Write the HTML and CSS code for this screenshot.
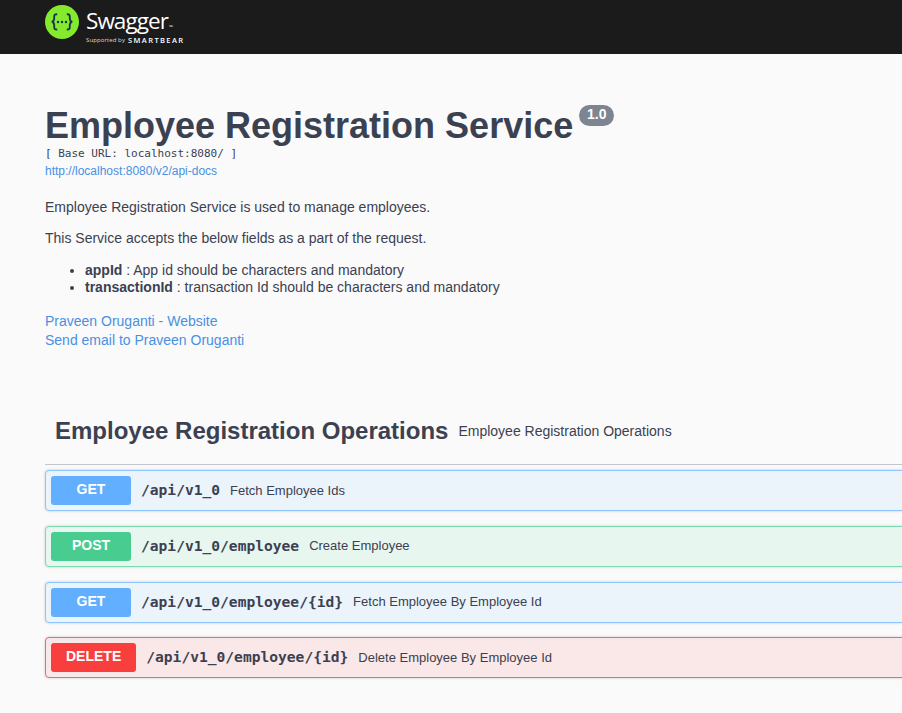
FILE: index.html
```html
<!DOCTYPE html>
<html lang="en">
<head>
<meta charset="utf-8">
<title>Swagger UI</title>
<link rel="stylesheet" href="styles.css">
</head>
<body>
<header class="topbar">
  <svg class="mark" viewBox="0 0 34 34" fill="none">
    <circle cx="17" cy="17" r="17" fill="#85ea2d"/>
    <path d="M12.2 9.3C9.5 9.1 9.1 10.2 9.2 12.2C9.4 15 9.1 16.3 6.8 16.8C9.1 17.3 9.4 18.7 9.2 21.4C9.1 23.8 9.7 24.7 12.2 24.5M21.8 9.3C24.5 9.1 24.9 10.2 24.8 12.2C24.6 15 24.9 16.3 27.2 16.8C24.9 17.3 24.6 18.7 24.8 21.4C24.9 23.8 24.3 24.7 21.8 24.5" stroke="#173647" stroke-width="1.9"/>
    <g fill="#173647"><circle cx="13" cy="17" r="1.2"/><circle cx="17" cy="17" r="1.2"/><circle cx="21" cy="17" r="1.2"/></g>
  </svg>
  <div class="brand">
    <div class="name">Swagger<span class="tm">™</span></div>
    <div class="support"><span class="by">Supported by</span><span class="smart">SMARTBEAR</span></div>
  </div>
</header>
<main>
  <section class="info">
    <div class="heading"><h1>Employee Registration Service</h1><span class="version">1.0</span></div>
    <div class="base">[ Base URL: localhost:8080/ ]</div>
    <a class="docs">http://localhost:8080/v2/api-docs</a>
    <p>Employee Registration Service is used to manage employees.</p>
    <p>This Service accepts the below fields as a part of the request.</p>
    <ul>
      <li><b>appId</b> : App id should be characters and mandatory</li>
      <li><b>transactionId</b> : transaction Id should be characters and mandatory</li>
    </ul>
    <div class="contact"><a>Praveen Oruganti - Website</a><a>Send email to Praveen Oruganti</a></div>
  </section>
  <section class="operations">
    <div class="tag"><h2>Employee Registration Operations</h2><small>Employee Registration Operations</small></div>
    <div class="op get"><span class="method">GET</span><code>/api/v1_0</code><span class="desc">Fetch Employee Ids</span></div>
    <div class="op post"><span class="method">POST</span><code>/api/v1_0/employee</code><span class="desc">Create Employee</span></div>
    <div class="op get"><span class="method">GET</span><code>/api/v1_0/employee/{id}</code><span class="desc">Fetch Employee By Employee Id</span></div>
    <div class="op delete"><span class="method">DELETE</span><code>/api/v1_0/employee/{id}</code><span class="desc">Delete Employee By Employee Id</span></div>
  </section>
</main>
</body>
</html>
```
FILE: styles.css
```css
* { box-sizing: border-box; }
body { margin: 0; background: #fafafa; color: #3b4151; font-family: "Liberation Sans", Arial, sans-serif; height: 713px; overflow: hidden; }
.topbar { height: 54px; background: #1b1b1b; display: flex; padding: 5px 0 0 45px; color: #fff; }
.mark { width: 34px; height: 34px; flex: none; }
.brand { margin-left: 7px; font-family: "Open Sans", sans-serif; }
.name { font-size: 22.5px; line-height: 28px; padding-top: 2px; letter-spacing: -0.95px; white-space: nowrap; height: 30px; }
.tm { font-size: 5px; letter-spacing: 0; margin-left: 1px; }
.support { display: flex; align-items: center; gap: 3px; line-height: 10px; white-space: nowrap; }
.by { font-size: 6px; letter-spacing: 0.1px; color: #ddd; }
.smart { font-size: 7.5px; font-weight: 600; letter-spacing: 1.4px; }
main { padding-left: 45px; }
.info { padding-top: 50px; height: 354px; }
.heading { display: flex; align-items: flex-start; height: 42px; }
h1 { margin: 0; font-size: 36px; line-height: 44px; white-space: nowrap; }
.version { margin: 1px 0 0 6px; width: 35px; height: 21px; border-radius: 11px; background: #7d8492; color: #fff; font-size: 14px; font-weight: 700; line-height: 19px; text-align: center; }
.base { font: 11px/16px "DejaVu Sans Mono", monospace; }
a { color: #4990e2; display: block; }
.docs { font-size: 12px; line-height: 18px; }
p { font-size: 14px; line-height: 17px; margin: 0 0 13.5px; }
.docs + p { margin-top: 19px; }
ul { margin: 0; padding: 2px 0 0 40px; font-size: 14px; line-height: 17px; }
.contact { margin-top: 16px; font-size: 14px; line-height: 18.5px; }
.tag { display: flex; align-items: center; height: 57px; border-bottom: 1px solid #c4c6cb; padding: 0 0 10px 10px; white-space: nowrap; }
h2 { margin: 0 10px 0 0; font-size: 24px; }
small { font-size: 14px; }
.op { height: 41px; margin: 5px -5px 14.75px 0; border: 1px solid; border-radius: 4px; display: flex; align-items: center; padding-left: 5px; box-shadow: 0 0 3px rgba(0,0,0,.19); white-space: nowrap; }
.op:not(.tag + .op) { margin-top: 0; }
.get { background: #ebf3fb; border-color: #8dc5fc; --method: #61affe; }
.post { background: #e8f6f0; border-color: #7cdab0; --method: #49cc90; }
.delete { background: #fae7e7; border-color: #f96666; --method: #f93e3e; }
.method { min-width: 80px; height: 29px; padding: 0 15px; border-radius: 3px; background: var(--method); color: #fff; font-size: 14px; font-weight: 700; line-height: 27px; text-align: center; }
code { margin: 0 10px; font: 700 14.6px/20px "DejaVu Sans Mono", monospace; padding-bottom: 1px; }
.desc { font-size: 13px; padding-bottom: 1px; }
```
